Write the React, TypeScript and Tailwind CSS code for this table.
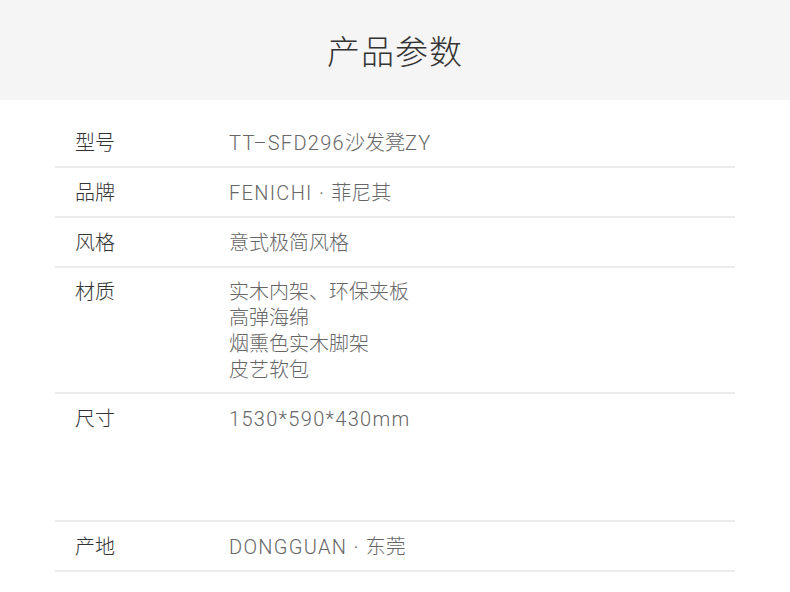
import React from 'react'

const cjk = '"Noto Sans CJK SC", sans-serif'
const latin = 'Roboto, "Noto Sans CJK SC", sans-serif'

interface Row {
  label: string
  values: string[]
  tall?: boolean
}

const rows: Row[] = [
  { label: '型号', values: ['TT–SFD296沙发凳ZY'] },
  { label: '品牌', values: ['FENICHI · 菲尼其'] },
  { label: '风格', values: ['意式极简风格'] },
  { label: '材质', values: ['实木内架、环保夹板', '高弹海绵', '烟熏色实木脚架', '皮艺软包'] },
  { label: '尺寸', values: ['1530*590*430mm'], tall: true },
  { label: '产地', values: ['DONGGUAN · 东莞'] },
]

const latinRe = /([\x20-\x7E·–]+)/

// 拉丁字符单独加字距，中文保持原宽
function Value({ text }: { text: string }) {
  const parts = text.split(latinRe).filter(Boolean)
  return (
    <div className="h-[26px]">
      {parts.map((p, i) =>
        /^[\x20-\x7E·–]+$/.test(p) ? (
          <span key={i} className="tracking-[1.3px]" style={{ fontFamily: latin }}>
            {p}
          </span>
        ) : (
          <span key={i}>{p}</span>
        )
      )}
    </div>
  )
}

export default function App() {
  return (
    <div className="w-[790px] h-[592px] bg-white overflow-hidden" style={{ fontFamily: cjk }}>
      {/* 标题 */}
      <div className="h-[100px] bg-[#f5f5f5] flex items-center justify-center">
        <h1 className="text-[33px] font-light text-[#333] tracking-[1px] leading-none">产品参数</h1>
      </div>

      {/* 参数表 */}
      <div className="mx-[55px] pt-[18px]">
        {rows.map((row) => (
          <div
            key={row.label}
            className={`flex border-b-2 border-[#ebebeb] ${
              row.values.length > 1 ? 'py-[10px]' : row.tall ? 'pt-[11px] h-[128px]' : 'py-[11px] h-[50px]'
            }`}
          >
            <div className="w-[174px] pl-[20px] text-[20px] font-light leading-[26px] text-[#333]">{row.label}</div>
            <div className="flex-1 text-[20px] leading-[26px] text-[#666] font-light">
              {row.values.map((v) => (
                <Value key={v} text={v} />
              ))}
            </div>
          </div>
        ))}
      </div>
    </div>
  )
}
